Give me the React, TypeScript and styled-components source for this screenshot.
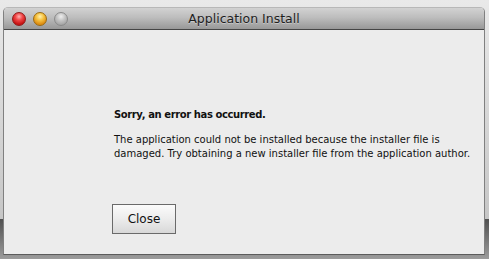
import React from "react";
import styled, {createGlobalStyle} from "styled-components";

const GlobalStyle = createGlobalStyle`
  html, body {
    margin: 0;
    padding: 0;
    height: 259px;
    overflow: hidden;
  }
  body {
    background: linear-gradient(to bottom, #e9e9e9 0, #c6c6c6 219px, #505050 219px, #9c9c9c 259px);
    font-family: "DejaVu Sans", "Lucida Grande", sans-serif;
  }
`

const Screen = styled.div`
  padding: 7px 0 0 3px;
`

const Window = styled.div`
  width: 482px;
  height: 248px;
  display: flex;
  flex-direction: column;
  border-radius: 5px 5px 0 0;
  box-sizing: border-box;
  border: 1px solid #808080;
  border-top-color: #b8b8b8;
  border-bottom-color: #5c5c5c;
  background: #ececec;
  overflow: hidden;
`

const TitleBar = styled.div`
  height: 21px;
  flex-shrink: 0;
  display: flex;
  align-items: center;
  position: relative;
  background: linear-gradient(to bottom, #d2d2d2 0%, #bdbdbd 45%, #989898 100%);
  border-bottom: 1px solid #454545;
`

const Lights = styled.div`
  display: flex;
  gap: 7px;
  padding-left: 8px;
`

const Light = styled.div<{ $color: "red" | "yellow" | "gray" }>`
  width: 14px;
  height: 14px;
  border-radius: 50%;
  box-sizing: border-box;
  border: 1px solid ${p => p.$color === "red" ? "#8e1b1b" : p.$color === "yellow" ? "#9a6a12" : "#8a8a8a"};
  background: ${p => p.$color === "red"
    ? "radial-gradient(circle at 50% 30%, #ffb0b0 0, #f04848 35%, #c41010 75%, #e04040 100%)"
    : p.$color === "yellow"
        ? "radial-gradient(circle at 50% 30%, #fff1b0 0, #f6c444 35%, #dc8a10 75%, #eeb040 100%)"
        : "radial-gradient(circle at 50% 30%, #eeeeee 0, #c4c4c4 40%, #a4a4a4 80%, #b8b8b8 100%)"};
`

const Title = styled.div`
  position: absolute;
  left: 0;
  right: 0;
  text-align: center;
  font-size: 12.5px;
  color: #1e1e1e;
  text-shadow: 0 1px 0 rgba(255, 255, 255, 0.35);
`

const Body = styled.div`
  flex: 1;
  padding: 78px 0 0 110px;
  color: #111;
`

const Heading = styled.div`
  font-size: 10px;
  line-height: 14px;
  font-weight: bold;
  letter-spacing: -0.4px;
`

const Message = styled.p`
  margin: 11px 0 0;
  font-size: 10px;
  line-height: 14px;
  white-space: nowrap;
`

const Button = styled.button`
  margin: 43px 0 0 -2px;
  width: 64px;
  height: 30px;
  border: 1px solid #6a6a6a;
  border-radius: 0;
  background: linear-gradient(to bottom, #fbfbfb 0%, #ececec 50%, #d8d8d8 100%);
  font-family: "DejaVu Sans", sans-serif;
  font-size: 12px;
  color: #111;
  padding: 0;
`

export default function App() {
    return <>
        <GlobalStyle/>
        <Screen>
            <Window>
                <TitleBar>
                    <Lights>
                        <Light $color="red"/>
                        <Light $color="yellow"/>
                        <Light $color="gray"/>
                    </Lights>
                    <Title>Application Install</Title>
                </TitleBar>
                <Body>
                    <Heading>Sorry, an error has occurred.</Heading>
                    <Message>
                        The application could not be installed because the installer file is<br/>
                        damaged. Try obtaining a new installer file from the application author.
                    </Message>
                    <Button>Close</Button>
                </Body>
            </Window>
        </Screen>
    </>
}
